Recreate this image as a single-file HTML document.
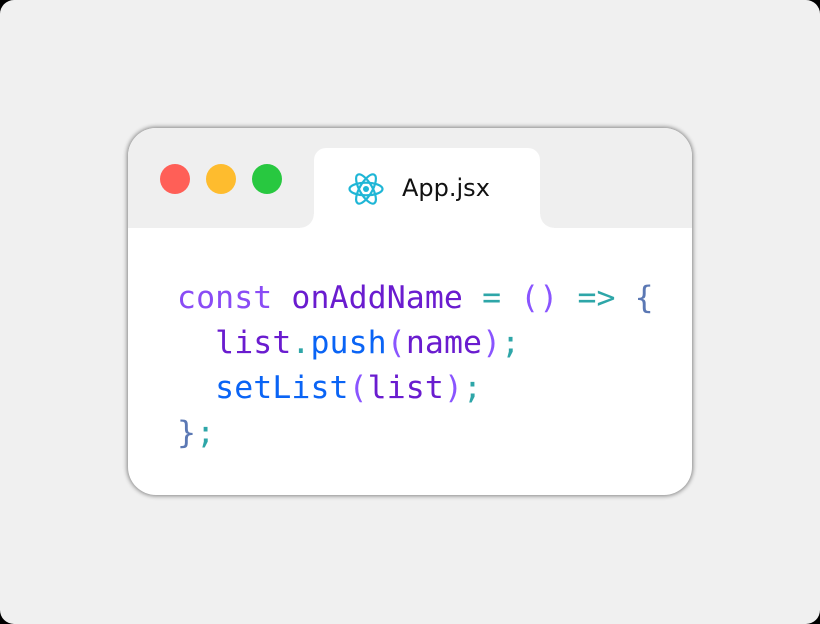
<!DOCTYPE html>
<html><head><style>
html{background:#000}
body{margin:0;width:820px;height:624px;background:#f0f0f0;position:relative;overflow:hidden;font-family:"Liberation Sans",sans-serif;border-radius:14px}
.win{position:absolute;left:128px;top:128px;width:564px;height:367px;border-radius:28px;background:#fff;box-shadow:0 0 4px 1px rgba(0,0,0,.45);overflow:hidden}
.hdr{position:absolute;left:0;top:0;width:564px;height:100px;background:#efefef}
.dot{position:absolute;top:36px;width:30px;height:30px;border-radius:50%}
.tab{position:absolute;left:186px;top:20px;width:226px;height:80px;background:#fff;border-radius:12px 12px 0 0}
.tab:before,.tab:after{content:"";position:absolute;bottom:0;width:14px;height:14px;background:radial-gradient(circle at 0 0,transparent 13.5px,#fff 14px)}
.tab:before{left:-14px}
.tab:after{right:-14px;background:radial-gradient(circle at 100% 0,transparent 13.5px,#fff 14px)}
.tt{position:absolute;left:88px;top:26px;color:#111;font-family:"DejaVu Sans","Liberation Sans",sans-serif;font-size:24px}
pre{position:absolute;left:49px;top:148px;margin:0;font-family:"DejaVu Sans Mono","Liberation Mono",monospace;font-size:31.5px;line-height:45px;letter-spacing:0.1px}
.k{color:#8a4cf5}.v{color:#6a1ccf}.o{color:#2ea6a8}.p{color:#8a55ff}.b{color:#5b78b4}.f{color:#0a64f5}
</style></head><body>
<div class="win">
<div class="hdr">
<div class="dot" style="left:32px;background:#ff5f57"></div>
<div class="dot" style="left:78px;background:#febc2e"></div>
<div class="dot" style="left:124px;background:#28c840"></div>
<div class="tab">
<svg style="position:absolute;left:33px;top:22px" width="38" height="38" viewBox="-19 -19 38 38" fill="none" stroke="#1fb6d6" stroke-width="2.2">
<ellipse rx="16.5" ry="6.3"/><ellipse rx="16.5" ry="6.3" transform="rotate(60)"/><ellipse rx="16.5" ry="6.3" transform="rotate(120)"/><circle r="3" fill="#1fb6d6" stroke="none"/></svg>
<div class="tt">App.jsx</div>
</div>
</div>
<pre><span class="k">const</span> <span class="v">onAddName</span> <span class="o">=</span> <span class="p">()</span> <span class="o">=&gt;</span> <span class="b">{</span>
  <span class="v">list</span><span class="o">.</span><span class="f">push</span><span class="p">(</span><span class="v">name</span><span class="p">)</span><span class="o">;</span>
  <span class="f">setList</span><span class="p">(</span><span class="v">list</span><span class="p">)</span><span class="o">;</span>
<span class="b">}</span><span class="o">;</span></pre>
</div>
</body></html>
